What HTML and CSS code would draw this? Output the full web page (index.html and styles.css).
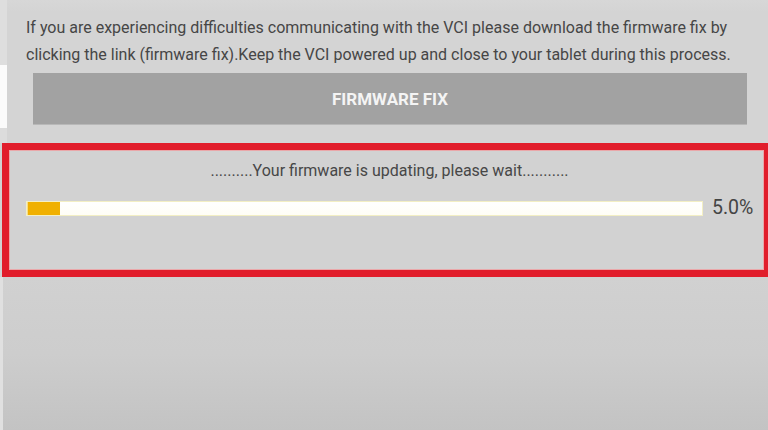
FILE: index.html
```html
<!DOCTYPE html>
<html>
<head>
<meta charset="utf-8">
<link rel="stylesheet" href="styles.css">
</head>
<body>
<div class="top">
  <div class="edge">
    <div class="edge-a"></div>
    <div class="edge-b"></div>
    <div class="edge-c"></div>
  </div>
  <div class="main">
    <p class="info">If you are experiencing difficulties communicating with the VCI please download the firmware fix by clicking the link (firmware fix).Keep the VCI powered up and close to your tablet during this process.</p>
    <div class="btn">FIRMWARE FIX</div>
  </div>
</div>
<div class="status">
  <div class="status-text">..........Your firmware is updating, please wait...........</div>
  <div class="progress-row">
    <div class="bar"><div class="fill" style="width:4.8%"></div></div>
    <div class="pct">5.0%</div>
  </div>
</div>
<div class="bottom"></div>
</body>
</html>
```

FILE: styles.css
```css
html, body {
  margin: 0;
  padding: 0;
  height: 100%;
}
body {
  width: 768px;
  height: 430px;
  overflow: hidden;
  display: flex;
  flex-direction: column;
  background: #d2d2d2;
  font-family: Roboto, "Liberation Sans", sans-serif;
  color: #474747;
}
.top {
  display: flex;
  height: 143px;
  flex: none;
}
.edge {
  width: 7px;
  display: flex;
  flex-direction: column;
  flex: none;
}
.edge-a { height: 65px; background: #dedede; }
.edge-b { height: 63px; background: #fbfbfb; }
.edge-c { flex: 1; background: #dcdcdc; }
.main {
  flex: 1;
  background: linear-gradient(#d7d7d7, #d4d4d4 12px, #d4d4d4);
  padding: 14px 14px 0 19px;
}
.info {
  margin: 0;
  font-size: 16px;
  line-height: 27px;
  color: #464646;
}
.btn {
  margin: 5px 7px 0 7px;
  height: 51px;
  background: #a2a2a2;
  color: #f4f4f4;
  font-weight: bold;
  font-size: 17px;
  display: flex;
  align-items: center;
  justify-content: center;
  box-shadow: 0 1px 0 #b8b8b8;
}
.status {
  flex: none;
  height: 120px;
  margin: 0 -3px 0 2px;
  border: 7px solid #e11d2b;
  box-shadow: inset 0 0 0 1px #eaa7a9;
  background: #d2d2d2;
  display: flex;
  flex-direction: column;
  align-items: stretch;
}
.status-text {
  text-align: center;
  font-size: 16px;
  margin-top: 12px;
  line-height: 18px;
  color: #474747;
  padding-left: 6px;
}
.progress-row {
  display: flex;
  align-items: center;
  margin-top: 17px;
  padding-left: 17px;
}
.bar {
  width: 677px;
  height: 15px;
  background: linear-gradient(#ffffff, #fffef6);
  border: 1px solid #f3efc4;
  box-sizing: border-box;
  position: relative;
}
.fill {
  height: 100%;
  background: #f0b000;
  border-left: 1px solid #f7dc85;
}
.pct {
  margin-left: 9px;
  font-size: 19.5px;
  color: #444;
  line-height: 22px;
}
.bottom {
  flex: 1;
  background: linear-gradient(#d1d1d1, #cdcdcd 50%, #c3c3c3);
  border-left: 3px solid #e0e0e0;
}
```
